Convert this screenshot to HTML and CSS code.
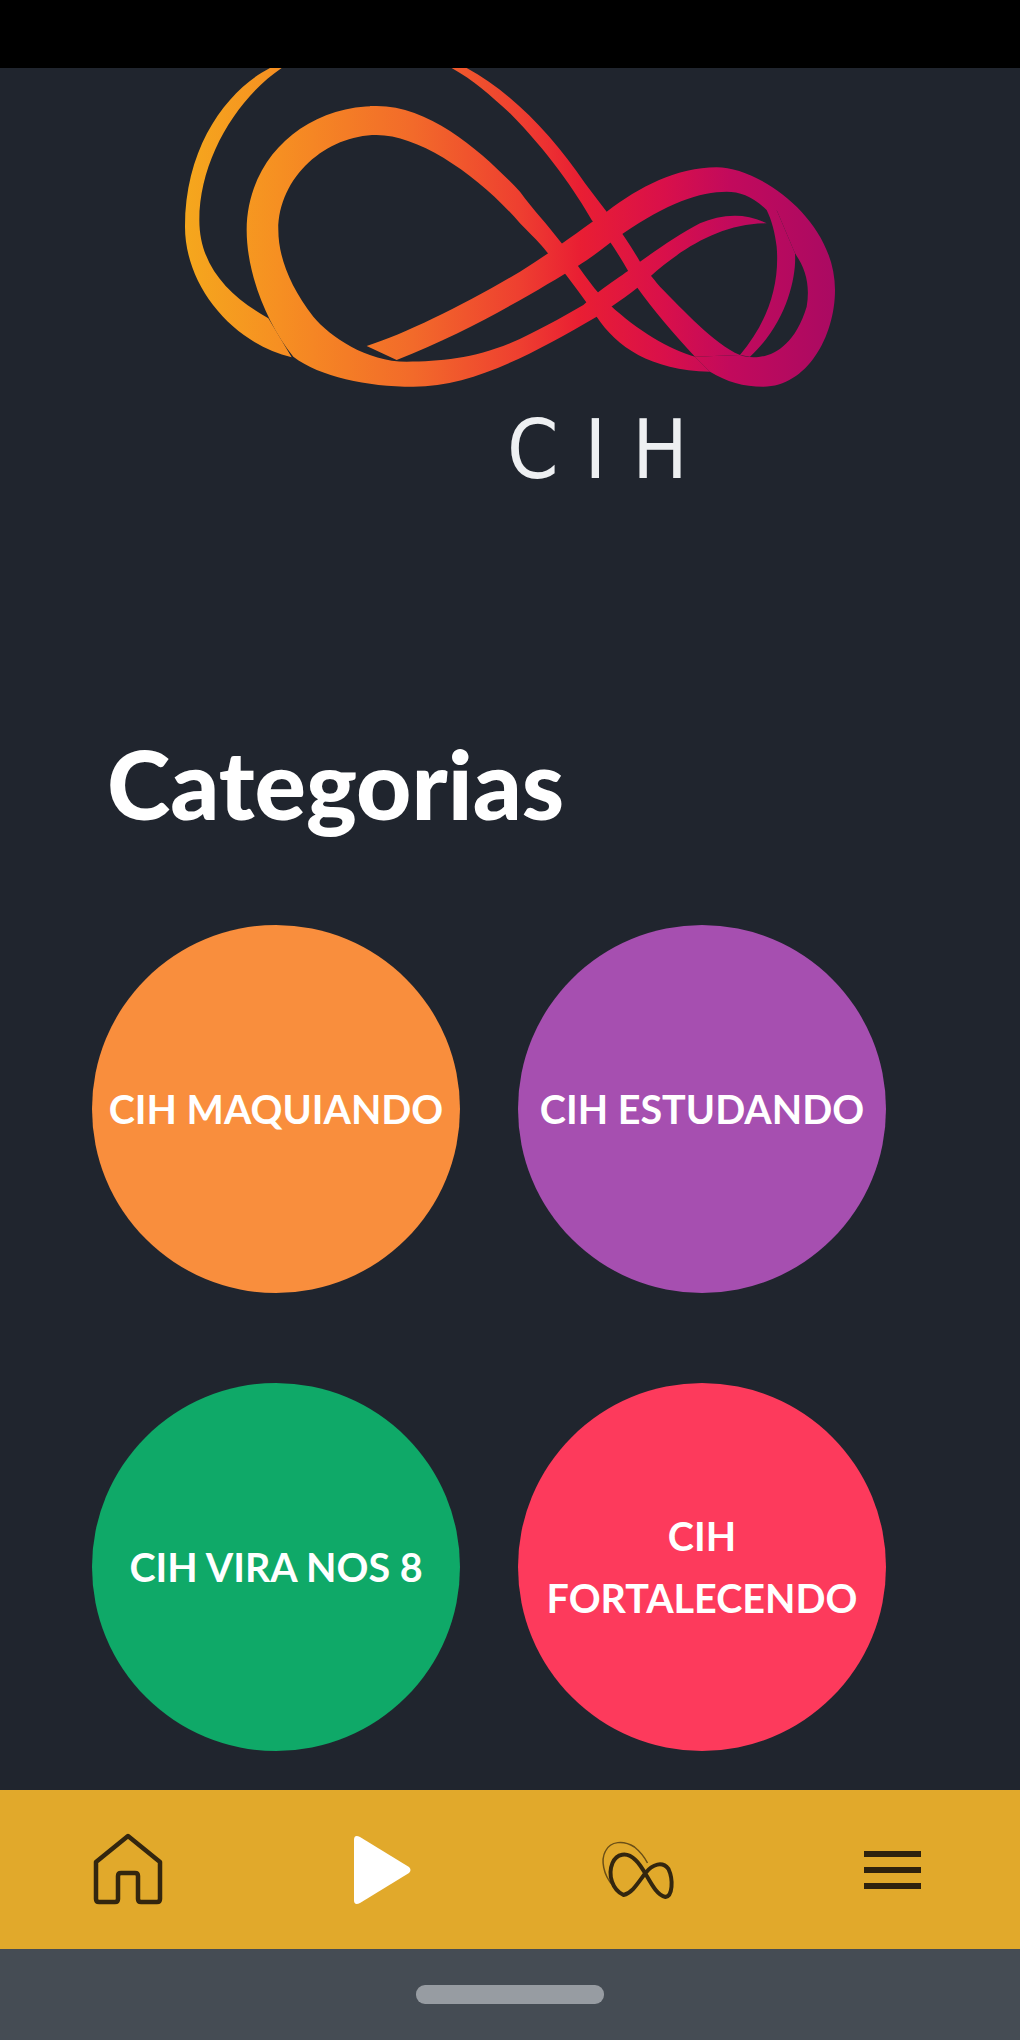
FILE: index.html
```html
<!DOCTYPE html>
<html>
<head>
    <title>CIH</title>
    <link rel="stylesheet" href="styles.css">
</head>
<body>
    <div class="status-bar"></div>

    <main class="content">
        <div class="logo">
            <svg class="logo-mark" viewBox="0 24 2010 966">
                <defs>
                    <linearGradient id="ribbon" gradientUnits="userSpaceOnUse" x1="15" y1="0" x2="1965" y2="0">
                        <stop offset="0" stop-color="#f5a71d"/>
                        <stop offset="0.146" stop-color="#f68f22"/>
                        <stop offset="0.351" stop-color="#f26a2a"/>
                        <stop offset="0.515" stop-color="#ee3f30"/>
                        <stop offset="0.608" stop-color="#e91e33"/>
                        <stop offset="0.736" stop-color="#d9104a"/>
                        <stop offset="0.838" stop-color="#c20a5c"/>
                        <stop offset="1" stop-color="#aa0a62"/>
                    </linearGradient>
                </defs>
                <g fill="url(#ribbon)">
                    <!-- thin left arc -->
                    <path d="M270 24C150 85 15 250 15 500C15 680 160 850 335 892L265 775C150 710 58 620 58 480C58 300 170 115 305 24Z"/>
                    <!-- arc from the top, runs into the right loop -->
                    <path d="M860 24C1000 100 1120 230 1215 370C1280 455 1330 520 1380 605C1400 630 1415 650 1440 680C1510 750 1600 850 1680 885L1545 890C1480 820 1420 750 1370 680C1350 640 1320 590 1290 545C1270 520 1250 500 1235 480C1190 400 1100 270 990 160C930 105 880 60 815 24Z"/>
                    <!-- big loop, left and bottom, ends in the tip on the right -->
                    <path d="M590 138C370 138 200 300 200 510C200 640 260 790 340 890C420 950 560 980 700 980C880 980 1060 880 1250 770C1300 735 1370 690 1410 650C1500 570 1620 490 1760 490C1690 455 1620 465 1560 490C1500 520 1430 570 1380 605C1340 640 1280 670 1210 735C1140 775 1070 815 990 850C880 895 780 905 680 905C560 905 450 830 400 770C330 680 295 590 295 510C295 350 440 225 590 225Z"/>
                    <!-- big loop, going down to the right -->
                    <path d="M570 138L590 138C760 138 920 290 1020 395C1060 450 1100 490 1145 550C1190 610 1240 690 1290 735C1370 810 1470 870 1545 890L1590 935C1410 930 1310 860 1250 770C1200 700 1150 630 1100 575C1080 550 1060 530 1020 490C900 350 720 225 590 225L570 225Z"/>
                    <!-- wide ribbon with the right loop -->
                    <path d="M560 858C680 820 860 730 1020 635C1110 580 1200 510 1280 455C1380 380 1490 322 1610 322C1740 322 1965 480 1965 690C1965 830 1880 980 1750 980C1690 980 1640 965 1590 935L1545 890L1680 885C1720 900 1830 905 1880 740C1890 680 1880 630 1845 580L1790 450L1760 450C1720 410 1680 395 1640 395C1560 395 1460 430 1330 520C1280 555 1240 590 1190 620C1090 680 880 810 650 900Z"/>
                    <!-- thin branch inside the right loop -->
                    <path d="M1790 450L1845 580C1850 650 1820 790 1710 890L1680 885C1760 790 1800 680 1790 560C1785 520 1775 480 1760 450Z"/>
                </g>
            </svg>
            <div class="logo-name">CIH</div>
        </div>

        <h1 class="title">Categorias</h1>

        <div class="categories">
            <div class="circle circle-orange">CIH MAQUIANDO</div>
            <div class="circle circle-purple">CIH ESTUDANDO</div>
            <div class="circle circle-green">CIH VIRA NOS 8</div>
            <div class="circle circle-red">CIH<br>FORTALECENDO</div>
        </div>
    </main>

    <nav class="bottom-nav">
        <div class="nav-item">
            <svg class="icon-home" viewBox="-2 0 120 100">
                <path d="M58 16L90 42V79Q90 82 87 82H71Q68 82 68 79V56Q68 53 65 53H51Q48 53 48 56V79Q48 82 45 82H29Q26 82 26 79V42Z"/>
            </svg>
        </div>
        <div class="nav-item">
            <svg class="icon-play" viewBox="0 0 58 70">
                <path d="M6 2L55 32Q58 35 55 38L6 68Q0 71 0 65V5Q0 -1 6 2Z"/>
            </svg>
        </div>
        <div class="nav-item">
            <svg class="icon-logo" viewBox="17.5 0 120 100">
                <path class="thin" d="M52 65C43 55 40 40 45 31C50 21 63 20 74 27C80 32 84 37 87 43"/>
                <path d="M63 75C52 70 47 55 52 43C56 34 66 31 75 40C86 50 92 74 105 77C112 76 113 60 108 49C102 41 92 44 85 53C78 62 72 73 63 75Z"/>
            </svg>
        </div>
        <div class="nav-item">
            <div class="icon-menu">
                <span></span>
                <span></span>
                <span></span>
            </div>
        </div>
    </nav>

    <div class="gesture-bar">
        <div class="gesture-pill"></div>
    </div>
</body>
</html>
```

FILE: styles.css
```css
body {
    margin: 0;
    width: 1020px;
    height: 2040px;
    display: flex;
    flex-direction: column;
    overflow: hidden;
    background-color: #20252e;
    font-family: "Lato", "Open Sans", sans-serif;
    color: #fff;
}

.status-bar {
    height: 68px;
    flex: none;
    background-color: #000;
}

.content {
    flex: 1;
    min-height: 0;
}

.logo-mark {
    display: block;
    width: 670px;
    height: 322px;
    margin-left: 180px;
}

.logo-name {
    margin: 10px 0 0 507px;
    height: 104px;
    font-family: "DejaVu Sans", sans-serif;
    font-stretch: condensed;
    font-size: 82px;
    font-weight: 400;
    line-height: 100px;
    letter-spacing: 26px;
    color: #eef0f2;
}

.title {
    margin: 224px 0 0 107px;
    font-size: 96px;
    font-weight: 900;
    line-height: 110px;
}

.categories {
    display: grid;
    grid-template-columns: 368px 368px;
    column-gap: 58px;
    row-gap: 90px;
    margin: 87px 0 0 92px;
}

.circle {
    height: 368px;
    border-radius: 50%;
    display: flex;
    align-items: center;
    justify-content: center;
    text-align: center;
    font-size: 39.5px;
    font-weight: 700;
    line-height: 62px;
}

.circle-orange {
    background-color: #f98e3d;
}

.circle-purple {
    background-color: #a64fb0;
}

.circle-green {
    background-color: #0fa968;
}

.circle-red {
    background-color: #fd3a5c;
}

.bottom-nav {
    height: 159px;
    flex: none;
    display: grid;
    grid-template-columns: repeat(4, 1fr);
    background-color: #e1a92b;
}

.nav-item {
    display: flex;
    align-items: center;
    justify-content: center;
}

.icon-home {
    width: 120px;
    height: 100px;
}

.icon-home path {
    fill: none;
    stroke: #33260f;
    stroke-width: 4.5;
    stroke-linejoin: round;
}

.icon-play {
    width: 58px;
    height: 70px;
}

.icon-play path {
    fill: #fff;
}

.icon-logo {
    width: 120px;
    height: 100px;
}

.icon-logo path {
    fill: none;
    stroke: #33260f;
    stroke-width: 4;
}

.icon-logo .thin {
    stroke: #6b4f16;
    stroke-width: 1.5;
}

.icon-menu {
    width: 57px;
    display: flex;
    flex-direction: column;
    gap: 10px;
}

.icon-menu span {
    height: 6px;
    background-color: #2e220e;
}

.gesture-bar {
    height: 91px;
    flex: none;
    display: flex;
    justify-content: center;
    padding-top: 36px;
    box-sizing: border-box;
    background-color: #454c54;
}

.gesture-pill {
    width: 188px;
    height: 19px;
    border-radius: 9px;
    background-color: #979ca2;
}
```
